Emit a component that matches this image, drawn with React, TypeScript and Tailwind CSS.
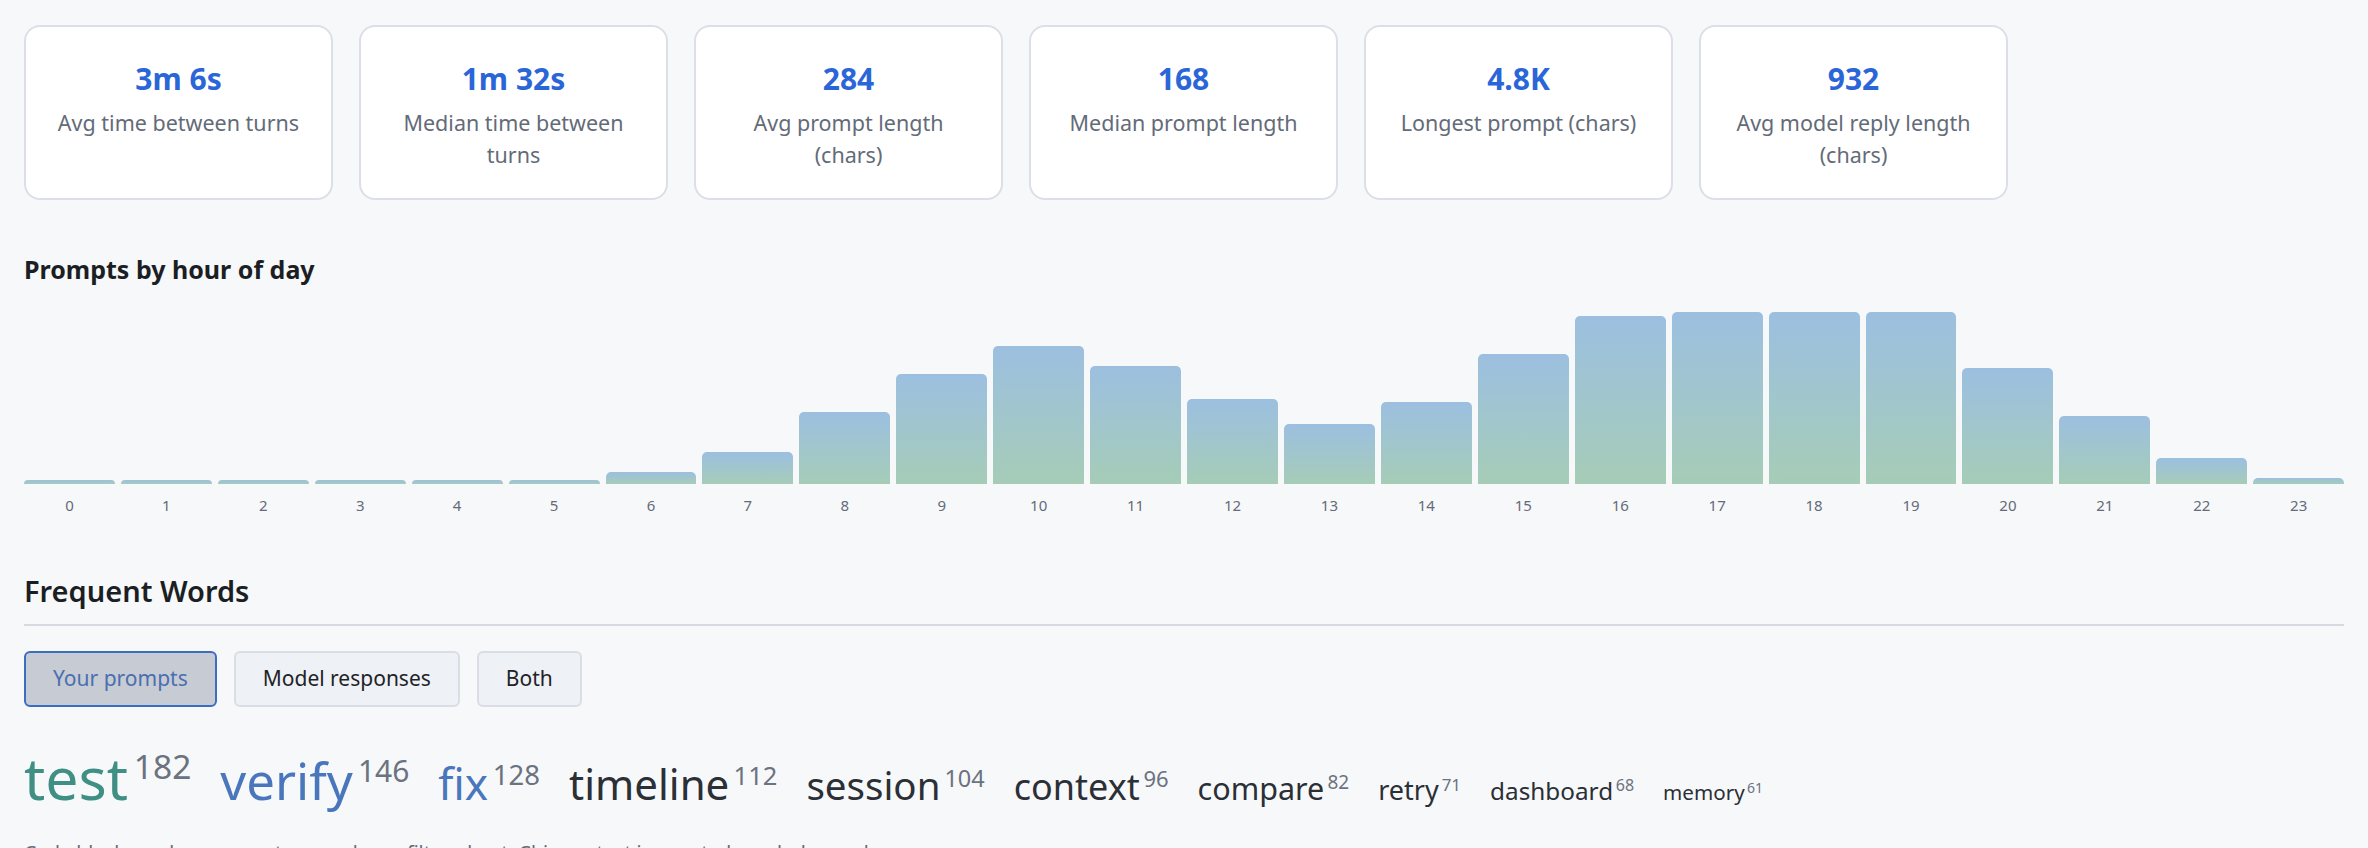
import React from "react";

const stats = [
  { value: "3m 6s", label: "Avg time between turns" },
  { value: "1m 32s", label: "Median time between turns" },
  { value: "284", label: "Avg prompt length (chars)" },
  { value: "168", label: "Median prompt length" },
  { value: "4.8K", label: "Longest prompt (chars)" },
  { value: "932", label: "Avg model reply length (chars)" },
];

const hours = [4, 4, 4, 4, 4, 4, 12, 32, 72, 110, 138, 118, 85, 60, 82, 130, 168, 172, 172, 172, 116, 68, 26, 6];

const words = [
  { w: "test", n: 182, size: 59, sup: 33.5, color: "text-[#3f8f85]" },
  { w: "verify", n: 146, size: 51, sup: 30, color: "text-[#4a76bb]" },
  { w: "fix", n: 128, size: 44, sup: 27.5, color: "text-[#4a76bb]" },
  { w: "timeline", n: 112, size: 42, sup: 25.5, color: "text-[#2b2f36]" },
  { w: "session", n: 104, size: 38.5, sup: 23.5, color: "text-[#2b2f36]" },
  { w: "context", n: 96, size: 36, sup: 22, color: "text-[#2b2f36]" },
  { w: "compare", n: 82, size: 30.5, sup: 19, color: "text-[#2b2f36]" },
  { w: "retry", n: 71, size: 27, sup: 17, color: "text-[#2b2f36]" },
  { w: "dashboard", n: 68, size: 24.3, sup: 16, color: "text-[#2b2f36]" },
  { w: "memory", n: 61, size: 20.6, sup: 14, color: "text-[#2b2f36]" },
];

export default function App() {
  return (
    <div
      className="min-h-screen bg-[#f7f8fa] px-[24px] pt-[25px] text-[#1f2328]"
      style={{ fontFamily: '"Noto Sans", "Open Sans", sans-serif' }}
    >
      {/* Stat cards */}
      <div className="flex gap-[26px]">
        {stats.map((s) => (
          <div
            key={s.label}
            className="flex w-[309px] flex-col items-center rounded-[16px] border-2 border-[#dcdfe7] bg-white px-[24px] pb-[28px] pt-[34px] text-center"
          >
            <div className="text-[30px] font-bold leading-[36px] text-[#2a66d8]">{s.value}</div>
            <div className="mt-[10px] text-[21.5px] leading-[31.5px] text-[#646b78]">{s.label}</div>
          </div>
        ))}
      </div>

      {/* Chart */}
      <h2 className="mt-[51px] text-[25px] font-bold leading-[36px] text-[#1b1f24]">Prompts by hour of day</h2>
      <div className="mt-[25px] flex gap-[6px]">
        {hours.map((h, i) => (
          <div key={i} className="flex flex-1 flex-col">
            <div className="flex h-[172px] items-end">
              <div
                className="w-full rounded-t-[5px] bg-gradient-to-b from-[#9cbfe0] to-[#a6ccb7]"
                style={{ height: `${h}px` }}
              />
            </div>
            <div className="mt-[10px] text-center text-[15px] leading-[22px] text-[#646b78]">{i}</div>
          </div>
        ))}
      </div>

      {/* Frequent words */}
      <h2 className="mt-[57px] border-b-2 border-[#d5dae2] pb-[16px] text-[29px] font-semibold leading-[35px] text-[#1b1f24]">
        Frequent Words
      </h2>
      <div className="mt-[25px] flex gap-[17px]">
        <button className="h-[56px] rounded-[6px] border-2 border-[#3d6dbf] bg-[#c7cbd3] px-[27px] text-[21px] text-[#4a6fb0]">
          Your prompts
        </button>
        <button className="h-[56px] rounded-[6px] border-2 border-[#d9dde5] bg-[#eef1f5] px-[27px] text-[21px] text-[#1f2328]">
          Model responses
        </button>
        <button className="h-[56px] rounded-[6px] border-2 border-[#d9dde5] bg-[#eef1f5] px-[27px] text-[21px] text-[#1f2328]">
          Both
        </button>
      </div>

      <div className="mt-[35px] flex flex-wrap items-baseline gap-x-[29px]">
        {words.map((w) => (
          <span key={w.w} className={`leading-[1.2] ${w.color}`} style={{ fontSize: `${w.size}px` }}>
            {w.w}
            <span
              className="ml-[0.17em] leading-none text-[#6b7280]"
              style={{ fontSize: `${w.sup}px`, verticalAlign: `${Math.round(w.size * 0.35)}px` }}
            >
              {w.n}
            </span>
          </span>
        ))}
      </div>

      <p className="mt-[25px] text-[19.5px] leading-[29px] text-[#646b78]">
        Code blocks and common stop words are filtered out. Chinese text is counted as whole words.
      </p>
    </div>
  );
}
